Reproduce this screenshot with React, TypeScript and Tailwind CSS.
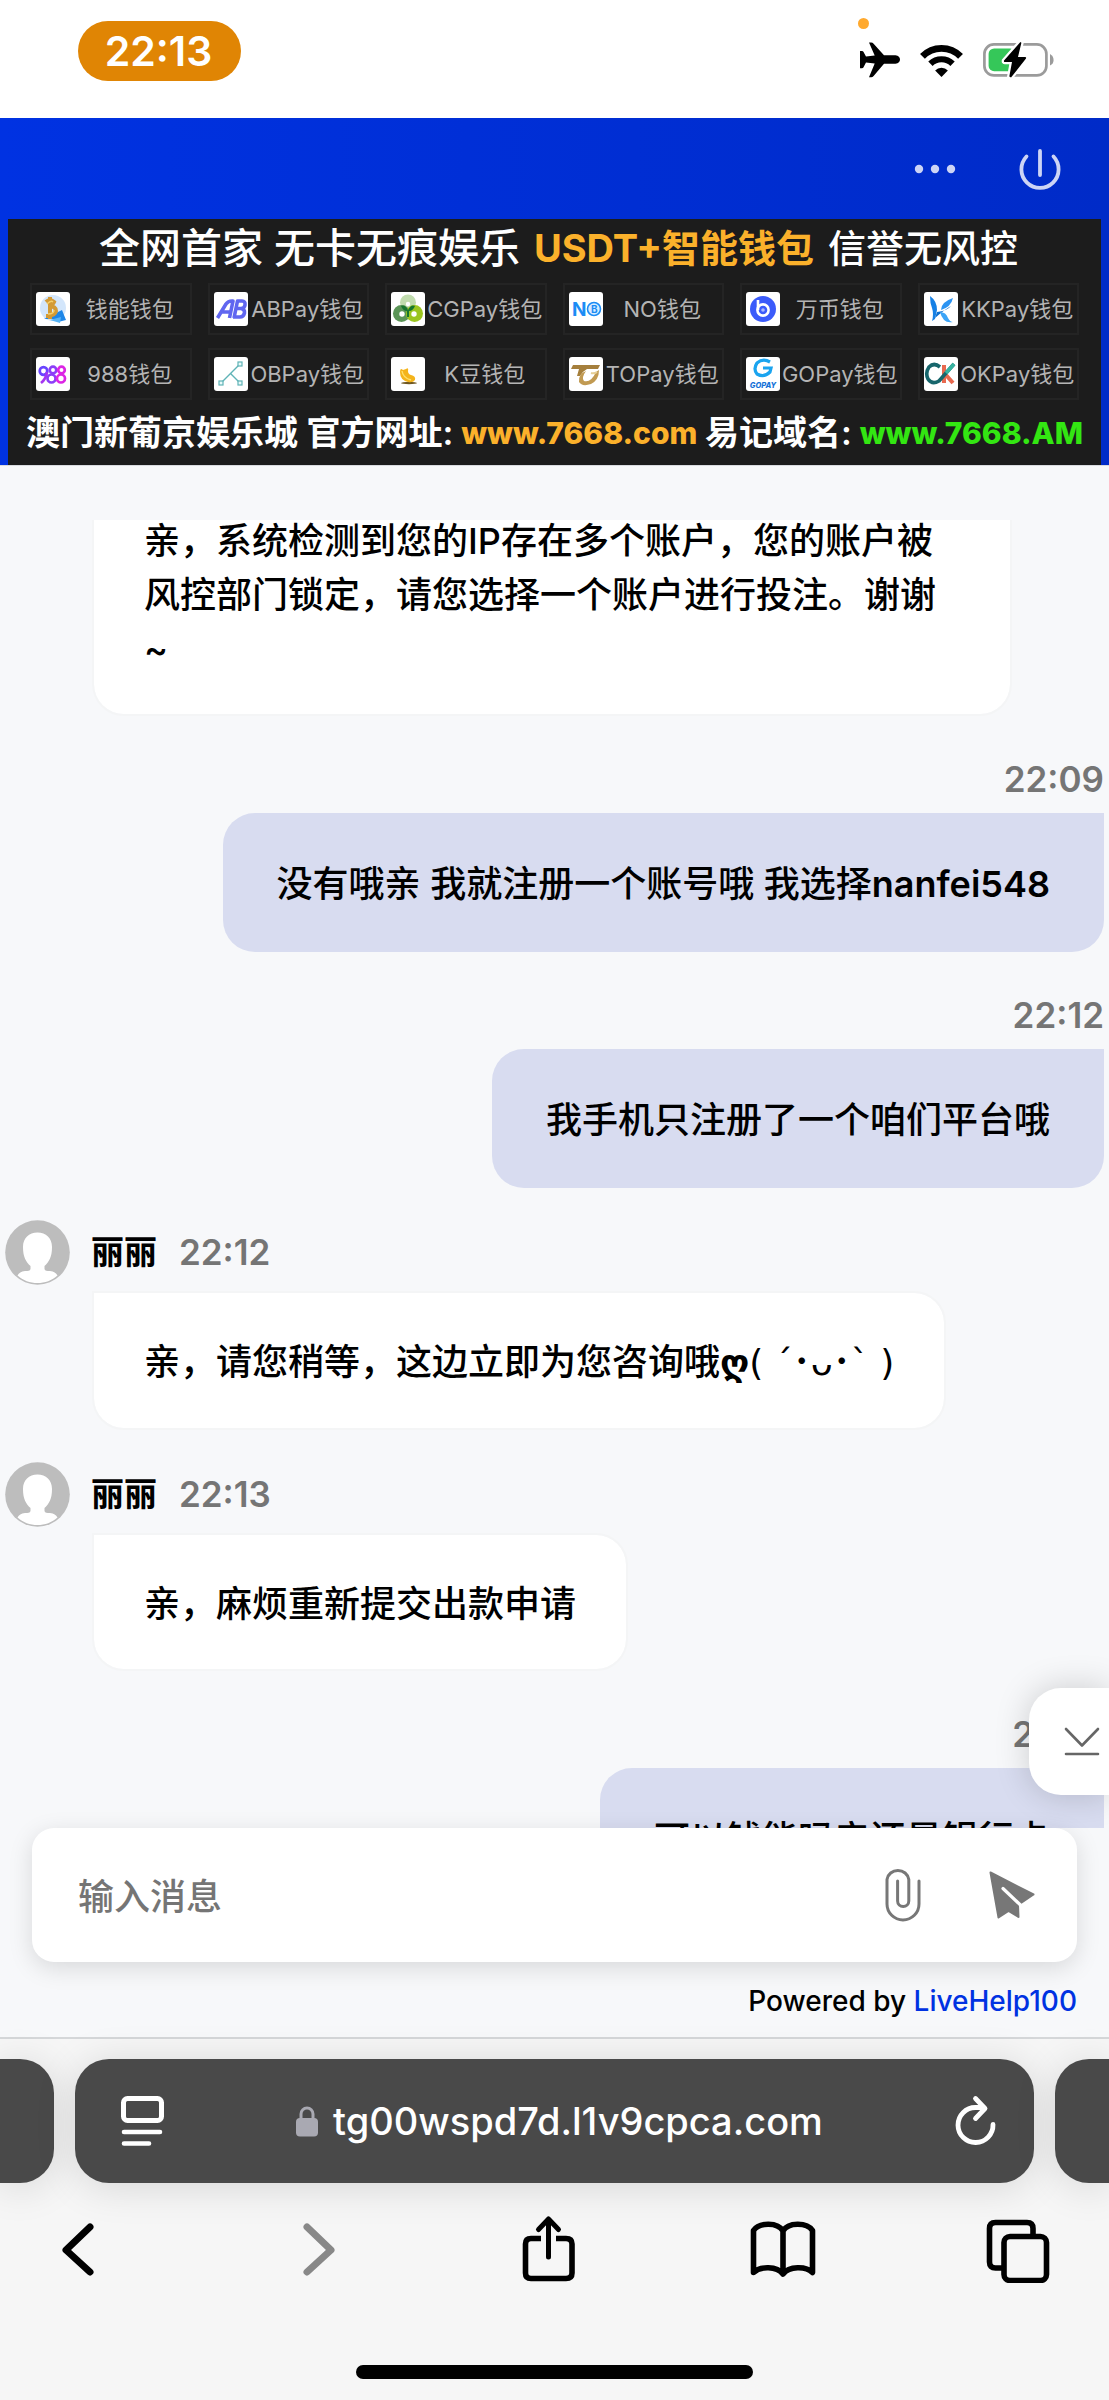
import React from 'react';
import type { ReactNode } from 'react';

const LATIN_CJK = "font-['Inter','Noto_Sans_CJK_SC','DejaVu_Sans',sans-serif]";

function StatusBar() {
  return (
    <header className="flex h-[118px] shrink-0 items-start justify-between bg-white pl-[78px] pr-[54px] pt-[21px]">
      <button
        type="button"
        className="flex h-[60px] w-[163px] items-center justify-center rounded-[30px] bg-[#e08504] pr-[2px] text-[41px] font-semibold leading-none text-white"
      >
        22:13
      </button>
      <div className="relative flex items-center gap-[20px] pt-[20px]">
        <span className="absolute -top-[3px] -left-[2px] size-[11px] rounded-full bg-[#ffa92e]" />
        <svg width="40" height="36" viewBox="0 0 40 36" role="img" aria-label="飞行模式">
          <path
            d="M9 0.5H11.2Q12.6 0.5 13.6 1.7L24 13.3H35.5Q40 14.2 40 17.5T35.5 21.8H24L13.6 34Q12.6 35.3 11.2 35.3H9L14.7 21.5L6 20.6L3.4 25.4Q3 26.2 2 26.2H0V9H2Q3 9 3.4 9.8L6 14.4L14.7 13.4Z"
            fill="#000"
          />
        </svg>
        <svg width="43" height="33" viewBox="0 0 42 32" role="img" aria-label="无线网络">
          <path d="M2.4 12A26 26 0 0 1 39.6 12" fill="none" stroke="#000" strokeWidth="6.6" />
          <path d="M10.2 19.2A15.3 15.3 0 0 1 31.8 19.2" fill="none" stroke="#000" strokeWidth="6" />
          <path d="M21 32L14.8 25.7A8.8 8.8 0 0 1 27.2 25.7Z" fill="#000" />
        </svg>
        <svg width="72" height="38" viewBox="0 -2 72 38" role="img" aria-label="正在充电">
          <rect x="1.4" y="1.4" width="62" height="31" rx="9.5" fill="none" stroke="#9b9b9b" strokeWidth="2.7" />
          <path d="M67 11Q70.6 13 70.6 17T67 22.5Z" fill="#9b9b9b" />
          <rect x="5.6" y="5.4" width="27" height="22.8" rx="5.5" fill="#35c759" />
          <rect x="29" y="5" width="6" height="24" fill="#fff" />
          <path
            d="M37.4 -1L21 17.6Q20.6 19 22 19H29L26.3 33.6L28 34.4L43 15.6Q43.6 14 42 14H35L38.4 -.2Z"
            fill="#000"
            stroke="#fff"
            strokeWidth="4.5"
            paintOrder="stroke"
          />
        </svg>
      </div>
    </header>
  );
}

function Logo({ children }: { children: ReactNode }) {
  return (
    <svg width="34" height="34" viewBox="0 0 34 34" className="shrink-0 rounded-[3px] bg-white" aria-hidden="true">
      {children}
    </svg>
  );
}

const wallets: { name: string; logo: ReactNode }[] = [
  {
    name: '钱能钱包',
    logo: (
      <Logo>
        <circle cx="17" cy="16" r="13" fill="#d3e6fb" />
        <path d="M8 27L26 18L30 28L22 30L19 27Z" fill="#1d86e8" />
        <path d="M14 28L25 25L24 31Z" fill="#58b4f5" />
        <path d="M10 10Q14 6 18 10Q16 14 12 14M12 14Q20 14 20 19Q19 24 10 24M14 5V27" fill="none" stroke="#d39a35" strokeWidth="4" />
        <path d="M11 12Q15 8 17 10M12 22Q18 22 18 18" fill="none" stroke="#f4cf6a" strokeWidth="1.5" />
      </Logo>
    ),
  },
  {
    name: 'ABPay钱包',
    logo: (
      <Logo>
        <g fill="none" stroke="#6066f0" strokeWidth="3.6" strokeLinejoin="round">
          <path d="M3.5 26L12 12Q14 9 18 9H19L15.500 26M8 20H16" />
          <path d="M20 26L23.500 9H28Q31.500 9 31 13Q30.500 16.500 27 16.500H22M27 16.500Q31 17 30.500 21Q29.500 25 26 25H19" />
        </g>
      </Logo>
    ),
  },
  {
    name: 'CGPay钱包',
    logo: (
      <Logo>
        <circle cx="17" cy="10.5" r="8" fill="#c1dcae" />
        <circle cx="10.5" cy="21.5" r="8.5" fill="#5b9557" />
        <circle cx="23.5" cy="21.5" r="8.5" fill="#9bc51f" />
        <path d="M10 14Q14 12 17 18Q20 12 24 14Q22 19 18 19V25H16V19Q12 19 10 14Z" fill="#17762f" />
        <circle cx="11" cy="22" r="2.7" fill="#fff" />
        <circle cx="23" cy="22" r="2.7" fill="#fff" />
        <circle cx="17" cy="12" r="2.2" fill="#fff" />
      </Logo>
    ),
  },
  {
    name: 'NO钱包',
    logo: (
      <Logo>
        <text x="3" y="24" fontSize="19" fontWeight="700" fill="#1c8cf5">N</text>
        <circle cx="25" cy="17" r="6.5" fill="#d8ecff" stroke="#1c8cf5" strokeWidth="1.6" />
        <text x="22" y="21" fontSize="10" fontWeight="700" fill="#1c8cf5">B</text>
      </Logo>
    ),
  },
  {
    name: '万币钱包',
    logo: (
      <Logo>
        <circle cx="17" cy="17" r="13" fill="#3b5bfa" />
        <path d="M12 8V18" stroke="#fff" strokeWidth="2.6" />
        <circle cx="17" cy="18" r="5.6" fill="none" stroke="#fff" strokeWidth="2.6" />
        <circle cx="17" cy="18" r="1.8" fill="#a9b8ff" />
      </Logo>
    ),
  },
  {
    name: 'KKPay钱包',
    logo: (
      <Logo>
        <path d="M6 4Q13 9 13 18L11 27L8 29Q10 22 8 16Q6 11 6 4Z" fill="#1580e5" />
        <path d="M29 6Q27 15 17 18Q17 10 29 6Z" fill="#2a93f2" />
        <path d="M27 14Q23 19 13 20L11 26Q20 18 27 14Z" fill="#0c6fd0" />
        <path d="M16 20Q22 20 24 26Q26 30 29 30Q19 32 16 20Z" fill="#3ba4f7" />
      </Logo>
    ),
  },
  {
    name: '988钱包',
    logo: (
      <Logo>
        <g fill="none" strokeWidth="2.7">
          <circle cx="7.5" cy="14" r="3.8" stroke="#6a45ff" />
          <path d="M11 15Q10 22 5 26" stroke="#a535f0" />
          <circle cx="17" cy="13" r="3.3" stroke="#8c3df8" />
          <circle cx="15.5" cy="21.5" r="4" stroke="#8c3df8" />
          <circle cx="25.5" cy="13" r="3.3" stroke="#dc25e4" />
          <circle cx="25" cy="21.5" r="4" stroke="#dc25e4" />
        </g>
      </Logo>
    ),
  },
  {
    name: 'OBPay钱包',
    logo: (
      <Logo>
        <path d="M8 25L25 8M17 17L25 25" stroke="#5fb3b6" strokeWidth="1.4" />
        <g fill="#e9fafa" stroke="#5fb3b6" strokeWidth="1.2">
          <rect x="5" y="24" width="4" height="4" />
          <rect x="24" y="5" width="4" height="4" />
          <rect x="24" y="24" width="4" height="4" />
        </g>
      </Logo>
    ),
  },
  {
    name: 'K豆钱包',
    logo: (
      <Logo>
        <ellipse cx="18" cy="26" rx="8" ry="1.2" fill="#6e5620" />
        <path d="M9 15Q9 10 12 13L15 12Q18 10 17 14Q17 17 20 18Q25 19 24 23Q22 26 17 25Q9 23 9 15Z" fill="#f4b41c" />
        <path d="M11 14Q12 21 20 23" fill="none" stroke="#fde06a" strokeWidth="1.4" />
      </Logo>
    ),
  },
  {
    name: 'TOPay钱包',
    logo: (
      <Logo>
        <path d="M4 8H31L29 12H18Q14 14 11 19H8L10 12H2Z" fill="#a57f3c" />
        <path d="M30 13Q30 23 22 27Q13 30 10 25Q9 17 17 14Q12 21 15 24Q22 26 27 15Z" fill="#c19a52" />
        <path d="M28 15Q25 17 22 16" stroke="#e6cf97" strokeWidth="2" fill="none" />
      </Logo>
    ),
  },
  {
    name: 'GOPay钱包',
    logo: (
      <Logo>
        <path d="M24 5Q17 1 11 6Q7 12 11 17Q18 21 24 15L25 11H17" fill="none" stroke="#1ba4ef" strokeWidth="3.2" />
        <text x="17" y="31" textAnchor="middle" fontSize="7.5" fontWeight="800" fontStyle="italic" fill="#1672d8">GOPAY</text>
      </Logo>
    ),
  },
  {
    name: 'OKPay钱包',
    logo: (
      <Logo>
        <path d="M20 8V26M22 18L29 26" stroke="#e8694f" strokeWidth="4" />
        <path d="M16 10Q10 5 5 10Q1 16 4 22Q8 28 15 24L30 7" fill="none" stroke="#17666c" strokeWidth="3.6" />
        <path d="M22 16L30 7" stroke="#36b3a0" strokeWidth="3.6" />
      </Logo>
    ),
  },
];

function Banner() {
  return (
    <section className="mx-2 flex flex-col bg-[#1c1c1c] pb-[10px] pt-[7px] font-['Inter','Noto_Sans_CJK_SC',sans-serif]">
      <h1 className="flex h-[44px] items-center justify-center gap-[14px] whitespace-nowrap pl-2 text-[38px] font-medium leading-[44px] text-white">
        <span className="text-[41px]">全网首家 无卡无痕娱乐</span>
        <span className="font-bold text-[#fbb12b]">USDT+智能钱包</span>
        <span>信誉无风控</span>
      </h1>
      <ul className="mx-[22px] mt-[13px] grid grid-cols-6 gap-x-[16px] gap-y-[13px]">
        {wallets.map((w) => (
          <li key={w.name} className="flex h-[52px] items-center border-2 border-[#242424] pl-1">
            {w.logo}
            <span className="flex-1 whitespace-nowrap text-center text-[22px] leading-6 text-[#b4b4b4]">{w.name}</span>
          </li>
        ))}
      </ul>
      <p className="mt-[11px] flex h-[44px] items-center justify-between whitespace-nowrap px-[18px] text-[34px] font-semibold leading-[44px] text-white">
        <span>澳门新葡京娱乐城 官方网址:</span>
        <a href="#com" className="text-[30px] font-extrabold text-[#fbb12b]">www.7668.com</a>
        <span>易记域名:</span>
        <a href="#am" className="text-[30px] font-extrabold text-[#33e612]">www.7668.AM</a>
      </p>
    </section>
  );
}

function ChatHeader() {
  return (
    <div className="shrink-0 border-b border-[#d9dbe0] bg-linear-to-r from-[#0032e2] to-[#002bc8]">
      <div className="flex h-[101px] items-center justify-end gap-[61px] pr-[46px]">
        <button type="button" aria-label="更多">
          <svg width="42" height="12" viewBox="0 0 42 12" fill="#cdd4f5">
            <circle cx="5" cy="6" r="4.2" />
            <circle cx="21" cy="6" r="4.2" />
            <circle cx="37" cy="6" r="4.2" />
          </svg>
        </button>
        <button type="button" aria-label="结束对话">
          <svg width="46" height="44" viewBox="0 0 46 44" fill="none" stroke="#cdd4f5" strokeWidth="3.8" strokeLinecap="round">
            <path d="M9.5 9.5A18.6 18.6 0 1 0 36.5 9.5M23 4V28" />
          </svg>
        </button>
      </div>
      <Banner />
    </div>
  );
}

function Avatar() {
  return (
    <svg width="65" height="65" viewBox="0 0 65 65" className="shrink-0" aria-hidden="true">
      <circle cx="32.5" cy="32.5" r="32.3" fill="#bdbdbd" />
      <path
        d="M32.5 12.5C41 12.5 47 18 47 27C47 37 44 42 39.5 46V49C40 51 42 51 45 51C49 51.5 51 53 52.5 55.5C47 60.5 40 63 32.5 63S18 60.5 12.5 55.5C14 53 16 51.5 20 51C23 51 25 51 25.5 49V46C21 42 18 37 18 27C18 18 24 12.5 32.5 12.5Z"
        fill="#fff"
      />
    </svg>
  );
}

function AgentBubble({ children }: { children: ReactNode }) {
  return (
    <p className="w-fit max-w-[920px] rounded-b-[32px] rounded-tr-[32px] border-2 border-[#f4f5f6] bg-white bg-clip-padding px-[50px] pb-[38px] pt-[42px] text-[36px] font-medium leading-[54px] text-black">
      {children}
    </p>
  );
}

function AgentMessage({ time, children }: { time: string; children: ReactNode }) {
  return (
    <article className="mt-8 pl-[5px]">
      <div className="flex items-center">
        <Avatar />
        <span className="ml-[21px] text-[33px] font-bold text-black">丽丽</span>
        <time className="ml-[22px] text-[35px] font-semibold text-[#757575]">{time}</time>
      </div>
      <div className="ml-[87px] mt-[6px]">
        <AgentBubble>{children}</AgentBubble>
      </div>
    </article>
  );
}

function VisitorMessage({ time, children }: { time: string; children: ReactNode }) {
  return (
    <article className="mt-9 flex flex-col items-end pr-[5px]">
      <time className="text-[35px] font-semibold leading-[54px] text-[#757575]">{time}</time>
      <p className="mt-[7px] rounded-b-[32px] rounded-tl-[32px] bg-[#d8dcf0] px-[54px] pb-[41px] pt-[44px] text-[36px] font-medium leading-[54px] text-black">
        {children}
      </p>
    </article>
  );
}

function Conversation() {
  return (
    <main className="mt-[54px] min-h-0 flex-1 overflow-hidden">
      <div className="-mt-[50px] ml-[92px] mr-[97px] flex flex-col *:w-full">
        <AgentBubble>
          亲，系统检测到您的IP存在多个账户，您的账户被
          <br />
          风控部门锁定，请您选择一个账户进行投注。谢谢
          <br />~
        </AgentBubble>
      </div>
      <VisitorMessage time="22:09">
        没有哦亲 我就注册一个账号哦 我选择<span className="font-semibold">nanfei548</span>
      </VisitorMessage>
      <VisitorMessage time="22:12">我手机只注册了一个咱们平台哦</VisitorMessage>
      <AgentMessage time="22:12">
        亲，请您稍等，这边立即为您咨询哦<span className="font-semibold">ღ</span>
        <span className="font-['DejaVu_Sans','Noto_Sans_CJK_SC',sans-serif]">( ´･ᴗ･` )</span>
      </AgentMessage>
      <AgentMessage time="22:13">亲，麻烦重新提交出款申请</AgentMessage>
      <VisitorMessage time="22:13">可以钱能吗亲还是银行卡</VisitorMessage>
    </main>
  );
}

function Composer() {
  return (
    <form className="relative mx-8 flex h-[134px] shrink-0 items-center rounded-[22px] bg-white pl-[46px] pr-[40px] shadow-[0_6px_24px_rgba(0,0,0,0.13)]">
      <input
        type="text"
        aria-label="输入消息"
        placeholder="输入消息"
        className="min-w-0 flex-1 bg-transparent pt-1 text-[36px] font-medium leading-[54px] text-black outline-none placeholder:text-[#757575]"
      />
      <button type="button" aria-label="附件" className="mr-[66px]">
        <svg width="36" height="56" viewBox="0 0 36 56" fill="none" stroke="#777" strokeWidth="3" strokeLinecap="round">
          <path d="M12.6 14V34A5.6 5.6 0 0 0 23.8 34V12.5A11 10.5 0 0 0 2 12.5V37A16 16 0 0 0 34 37V14" />
        </svg>
      </button>
      <button type="submit" aria-label="发送">
        <svg width="50" height="50" viewBox="0 0 50 50">
          <path d="M3.5 2.5L46.5 24.5L31 35L31.5 47L21.5 41L11.5 47.5Z" fill="#777" stroke="#777" strokeWidth="2" strokeLinejoin="round" />
          <path d="M16 18.5L34.5 36" stroke="#fff" strokeWidth="3.2" strokeLinecap="round" />
        </svg>
      </button>
      <button
        type="button"
        aria-label="滚动到底部"
        className="absolute -right-8 -top-[140px] flex h-[107px] w-[80px] items-center justify-center rounded-l-[32px] bg-white pl-[26px] shadow-[0_0_34px_rgba(0,0,0,0.18)]"
      >
        <svg width="36" height="30" viewBox="0 0 36 30" fill="none" stroke="#666" strokeWidth="2.6" strokeLinecap="round" strokeLinejoin="round">
          <path d="M2 2L18 18.5L34 2M2 27H34" />
        </svg>
      </button>
    </form>
  );
}

function AddressBar() {
  return (
    <div className="flex gap-[21px] overflow-x-clip">
      <div className="h-[124px] w-[54px] rounded-r-[34px] bg-[#494949] shadow-[0_4px_40px_rgba(0,0,0,0.13)]" />
      <div className="flex h-[124px] flex-1 items-center rounded-[34px] bg-[#494949] pl-[44px] pr-[36px] shadow-[0_4px_40px_rgba(0,0,0,0.13)]">
        <button type="button" aria-label="页面菜单">
          <svg width="46" height="52" viewBox="0 0 46 52" fill="none" stroke="#fff" strokeWidth="5">
            <rect x="4.5" y="3.5" width="38" height="22" rx="4" />
            <path d="M5 37H41M5 48.5H30" strokeLinecap="round" strokeWidth="4.6" />
          </svg>
        </button>
        <a href="#site" className="flex flex-1 items-center justify-center gap-[15px] text-[38px] font-medium leading-none text-white">
          <svg width="22" height="31" viewBox="0 0 22 31" aria-hidden="true">
            <rect y="12" width="22" height="18.5" rx="4" fill="#a9a9b2" />
            <path d="M5 14V8A6 6 0 0 1 17 8V14" fill="none" stroke="#a9a9b2" strokeWidth="3" />
          </svg>
          <span>tg00wspd7d.l1v9cpca.com</span>
        </a>
        <button type="button" aria-label="重新载入">
          <svg width="44" height="52" viewBox="0 0 44 52" fill="none" stroke="#fff" strokeWidth="4.8" strokeLinecap="round" strokeLinejoin="round">
            <path d="M39 29.5A17.5 17.5 0 1 1 21.5 12.5H30M21.5 3.5L31 13.5L21.5 23.5" />
          </svg>
        </button>
      </div>
      <div className="h-[124px] w-[54px] rounded-l-[34px] bg-[#494949] shadow-[0_4px_40px_rgba(0,0,0,0.13)]" />
    </div>
  );
}

function ToolbarButton({ label, disabled, children }: { label: string; disabled?: boolean; children: ReactNode }) {
  return (
    <button type="button" aria-label={label} disabled={disabled} className="text-black disabled:text-[#888]">
      <svg width="66" height="70" viewBox="0 0 66 70" fill="none" stroke="currentColor" strokeWidth="5.6" strokeLinecap="round" strokeLinejoin="round">
        {children}
      </svg>
    </button>
  );
}

function BrowserChrome() {
  return (
    <footer className="shrink-0 border-t-2 border-[#d5d7d9] bg-[#f6f6f6] pt-5">
      <AddressBar />
      <nav aria-label="浏览器工具栏" className="mt-[30px] flex justify-between pl-[45px] pr-[58px]">
        <ToolbarButton label="后退">
          <path d="M45 14L21 37L45 59" strokeWidth="7" />
        </ToolbarButton>
        <ToolbarButton label="前进" disabled>
          <path d="M27 14L51 37L27 59" strokeWidth="7" />
        </ToolbarButton>
        <ToolbarButton label="分享">
          <path d="M26 25.5H16Q10.5 25.5 10.5 31V60Q10.5 65.5 16 65.5H51Q57 65.5 57 60V31Q57 25.5 51 25.5H41" strokeLinecap="butt" />
          <path d="M33.5 7V44M23.5 16.5L33.5 6L43.5 16.5" strokeWidth="5" />
        </ToolbarButton>
        <ToolbarButton label="书签">
          <path d="M33 18C28 9 9 9 3.5 17.5V59.5C10 53 27 53 33 61C39 53 56 53 62.5 59.5V17.5C57 9 38 9 33 18V60" />
        </ToolbarButton>
        <ToolbarButton label="标签页">
          <path d="M18.5 55H10.5Q4.5 55 4.5 49V15.5Q4.5 9.5 10.5 9.5H42Q48 9.5 48 15.5V22" strokeLinecap="butt" />
          <rect x="19" y="23.5" width="42.5" height="44" rx="6" />
        </ToolbarButton>
      </nav>
      <div className="mx-auto mb-[21px] mt-[82px] h-[14px] w-[397px] rounded-full bg-black" />
    </footer>
  );
}

export default function App() {
  return (
    <div className={`flex h-screen min-h-[1500px] flex-col overflow-hidden bg-[#f7f8fa] ${LATIN_CJK}`}>
      <StatusBar />
      <ChatHeader />
      <Conversation />
      <Composer />
      <p className="mx-8 mb-[18px] mt-[21px] shrink-0 text-right text-[28px] font-medium leading-[36px] text-black">
        Powered by <a href="#livehelp" className="text-[#0032e2]">LiveHelp100</a>
      </p>
      <BrowserChrome />
    </div>
  );
}
